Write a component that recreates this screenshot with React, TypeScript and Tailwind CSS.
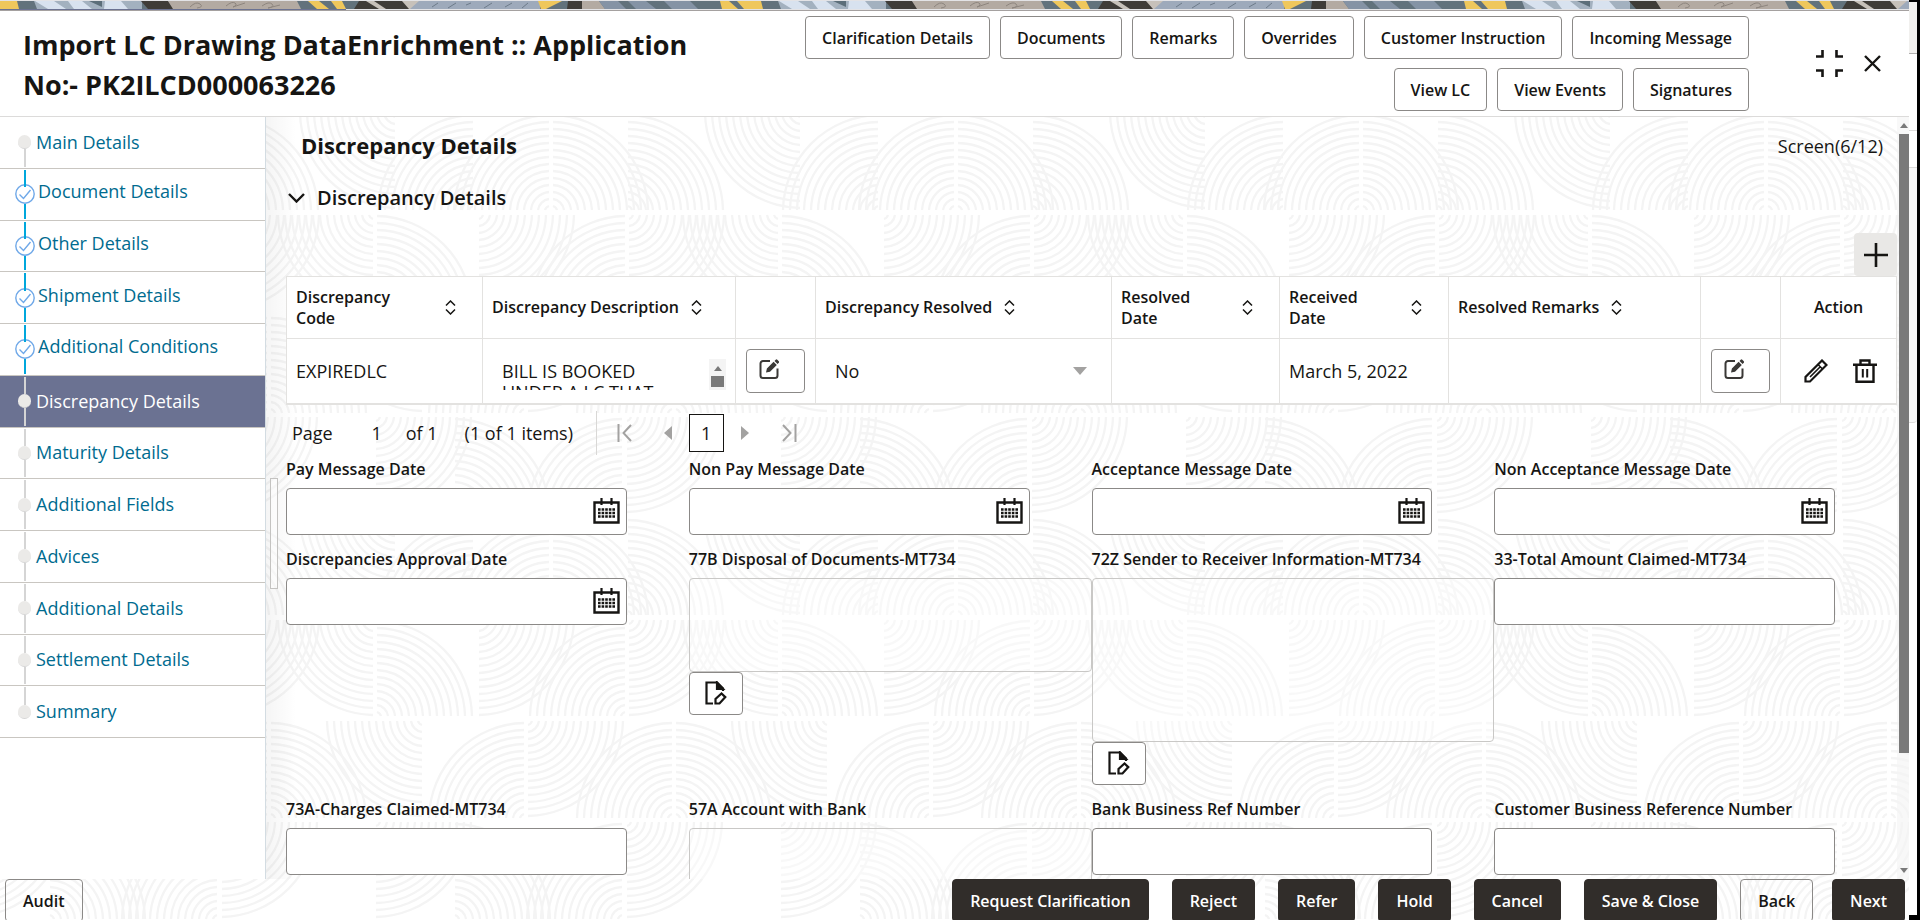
import { useId } from "react";
import type { ReactNode } from "react";
import clsx from "clsx";

const HEADER_ACTIONS = [
  "Clarification Details",
  "Documents",
  "Remarks",
  "Overrides",
  "Customer Instruction",
  "Incoming Message",
  "View LC",
  "View Events",
  "Signatures",
];

const FOOTER_ACTIONS = ["Request Clarification", "Reject", "Refer", "Hold", "Cancel", "Save & Close"];

type StepState = "visited" | "current" | "todo";

const STEPS: { label: string; state: StepState }[] = [
  { label: "Main Details", state: "todo" },
  { label: "Document Details", state: "visited" },
  { label: "Other Details", state: "visited" },
  { label: "Shipment Details", state: "visited" },
  { label: "Additional Conditions", state: "visited" },
  { label: "Discrepancy Details", state: "current" },
  { label: "Maturity Details", state: "todo" },
  { label: "Additional Fields", state: "todo" },
  { label: "Advices", state: "todo" },
  { label: "Additional Details", state: "todo" },
  { label: "Settlement Details", state: "todo" },
  { label: "Summary", state: "todo" },
];

/* ---------- background drawings ---------- */

const RADII = [6, 13, 20, 27, 34, 41, 48, 55, 62, 69, 76, 83, 90, 97];

type Corner = "TL" | "TR" | "BL" | "BR";

// quarter fans of the repeating 405x405 tile: centre x, centre y, quadrant
const FANS: [number, number, Corner][] = [
  [103, 101, "TL"],
  [179, 101, "TL"],
  [179, 101, "TR"],
  [254, 101, "TR"],
  [25, 0, "BL"],
  [430, 0, "BL"],
  [255, 102, "BR"],
  [3, 102, "BL"],
  [408, 102, "BL"],
  [3, 202, "TR"],
  [105, 102, "BR"],
  [255, 202, "TL"],
  [302, 304, "TL"],
  [302, 304, "TR"],
  [52, 203, "BL"],
  [457, 203, "BL"],
  [154, 304, "TL"],
  [154, 203, "BR"],
  [253, 304, "BR"],
  [2, 304, "BR"],
  [81, 405, "TR"],
  [252, 405, "TL"],
];

function fanPath(cx: number, cy: number, corner: Corner) {
  const sx = corner.endsWith("L") ? -1 : 1;
  const sy = corner.startsWith("T") ? -1 : 1;
  const sweep = sx * sy === 1 ? 1 : 0;
  return RADII.map((r) => {
    const startX = cx + sx * r;
    const startY = cy + sy * 2;
    return `M${startX} ${startY}A${r} ${r} 0 0 ${sweep} ${cx + sx * 2} ${cy + sy * r}`;
  }).join("");
}

function ArcBackdrop() {
  return (
    <svg className="absolute inset-0 -z-10 h-full w-full" aria-hidden="true">
      <defs>
        <pattern id="arcs" width="405" height="405" patternUnits="userSpaceOnUse" patternTransform="translate(-33 111)">
          <g fill="none" stroke="#f4f4f4" strokeWidth="2.3">
            {FANS.map(([cx, cy, corner]) => (
              <path key={`${cx}-${cy}-${corner}`} d={fanPath(cx, cy, corner)} />
            ))}
          </g>
        </pattern>
      </defs>
      <rect width="100%" height="100%" fill="url(#arcs)" />
    </svg>
  );
}

function BannerStrip() {
  return (
    <div className="h-[11px] shrink-0 border-b border-[#a5a1a0] bg-[#e3e3e6] pt-px">
      <svg className="block h-2 w-full" aria-hidden="true">
        <defs>
          <pattern id="banner" width="744" height="8" patternUnits="userSpaceOnUse">
            <rect width="744" height="8" fill="#62727c" />
            <path d="M0 0H17L19 8H0z" fill="#efc75c" />
            <path d="M34 0H142V8H37z" fill="#a3b1bf" />
            <path d="M35 0H54L66 8H48z M68 0H82L92 8H74z M105 0H121L128 8H104z" fill="#d8e2ef" />
            <path d="M89 0H102V6z" fill="#5c6e79" />
            <path d="M141 0H168L174 8H148z" fill="#3f3c38" />
            <path d="M168 0H297L301 8H173z" fill="#b3aaa2" />
            <path
              d="M190 6q6-6 10-3t-3 4M226 5q6-5 9-3t-2 4l12-4M262 5q7-5 10-2t-4 4l12-3"
              fill="none"
              stroke="#8d857e"
            />
            <path d="M308 0H319L329 8H317z M331 0H342L346 8H337z" fill="#efc75c" />
            <path d="M359 0H418L410 8H354z" fill="#3f3c38" />
            <path d="M366 0H374L386 8H379z M402 0H422L412 8H409z" fill="#c7c1ba" />
            <path d="M419 0H540V8H410z" fill="#9eaabb" />
            <path
              d="M432 6l6-4M448 7l8-5M466 4l5-2M484 7l8-5M505 6l7-4M522 7l6-5"
              fill="none"
              stroke="#6d7b8a"
            />
            <path d="M538 0H562L546 8H541z" fill="#efc75c" />
            <path d="M568 0H582V8H567z" fill="#3f3c38" />
            <path d="M582 0H599L605 8H582z" fill="#b3aaa2" />
            <path d="M599 0H618L626 8H605z M628 0H646L656 8H636z M664 0H690L698 8H672z" fill="#8593a5" />
            <path d="M720 0H729L738 8H722z M737 0H744V8H744z" fill="#efc75c" />
          </pattern>
        </defs>
        <rect width="100%" height="8" fill="url(#banner)" />
      </svg>
      <div className="h-px w-[346px] bg-[#6b7292]" />
    </div>
  );
}

/* ---------- icons ---------- */

function CalendarIcon() {
  return (
    <svg width="27" height="26" viewBox="0 0 27 26" fill="none" stroke="#161513" aria-hidden="true">
      <path d="M1.5 4.5h24v20h-24z" strokeWidth="2.4" />
      <path d="M8.5 0v7M18.5 0v7" strokeWidth="2.2" />
      <path d="M5 11.5h17M5 15h17M5 18.5h17" strokeWidth="2.4" strokeDasharray="2.6 1" />
    </svg>
  );
}

function ComposeIcon() {
  return (
    <svg width="20" height="20" viewBox="0 0 20 20" fill="none" aria-hidden="true">
      <path
        d="M11 2H4a2.5 2.5 0 0 0-2.5 2.5v12A2.5 2.5 0 0 0 4 19h12a2.5 2.5 0 0 0 2.5-2.5V9.5"
        stroke="#3a3836"
        strokeWidth="2"
      />
      <path
        d="M7 13.5l.9-4L14.6 2.8l3.2 3.2-6.8 6.7z M15.5 1.9l1.2-1.2q.8-.7 1.6 0l1.5 1.5q.7.8 0 1.6L18.6 5z"
        fill="#3a3836"
      />
    </svg>
  );
}

function PencilIcon() {
  return (
    <svg width="24" height="24" viewBox="0 0 24 24" fill="none" stroke="#161513" strokeWidth="2.2" aria-hidden="true">
      <path d="M1.5 22.5V18L18 1.5 22.5 6 6 22.5z" />
      <path d="M14 5.5l4.5 4.5M6 18L16 8" strokeWidth="1.6" />
    </svg>
  );
}

function TrashIcon() {
  return (
    <svg width="24" height="24" viewBox="0 0 24 24" fill="none" stroke="#161513" strokeWidth="2.4" aria-hidden="true">
      <path d="M0 5.8h24M3.5 6v16.8h17V6M7.5 5.5v-4h9v4" />
      <path d="M9.8 10v8.5M14.2 10v8.5" strokeWidth="2" />
    </svg>
  );
}

function DocumentEditIcon() {
  return (
    <svg width="22" height="24" viewBox="0 0 22 24" fill="none" stroke="#161513" strokeWidth="2.2" aria-hidden="true">
      <path d="M8 22.5H1.5v-21H12l6 6V10" />
      <path d="M12 1.5V8h6z" fill="#161513" />
      <path d="M10.5 22.5V18l6-5.5 3.8 3.6-5.8 6.4z" />
    </svg>
  );
}

function SortIcon() {
  return (
    <svg
      className="shrink-0"
      width="11"
      height="15"
      viewBox="0 0 11 15"
      fill="none"
      stroke="#161513"
      strokeWidth="1.5"
      aria-hidden="true"
    >
      <path d="M1 5.5L5.5 1 10 5.5M1 9.5L5.5 14 10 9.5" />
    </svg>
  );
}

function CheckCircle() {
  return (
    <svg width="20" height="20" viewBox="0 0 20 20" fill="none" stroke="#6fa8e8" strokeWidth="1.4" aria-hidden="true">
      <circle cx="10" cy="10" r="9.2" fill="#fff" />
      <path d="M10 0v3" stroke="#00a7dc" strokeWidth="2" />
      <path d="M4.5 10.5l4 4 7-8.5" />
    </svg>
  );
}

/* ---------- page parts ---------- */

function OutlineButton({ children, className }: { children: ReactNode; className?: string }) {
  return (
    <button
      type="button"
      className={clsx(
        "h-[43px] rounded-[4px] border border-[#8b8987] text-base font-semibold whitespace-nowrap",
        className,
      )}
    >
      {children}
    </button>
  );
}

function PageHeader() {
  return (
    <header className="flex h-[106px] shrink-0 items-start border-b border-[#dcdbda] bg-white pr-7">
      <h1 className="w-[720px] shrink-0 pt-[14px] pl-[23px] text-[27px] leading-10 font-bold">
        Import LC Drawing DataEnrichment :: Application No:- PK2ILCD000063226
      </h1>
      <div className="ml-auto flex max-w-[960px] flex-wrap justify-end gap-x-[10px] gap-y-[9px] pt-[5px]">
        {HEADER_ACTIONS.map((label) => (
          <OutlineButton key={label} className="bg-white px-4">
            {label}
          </OutlineButton>
        ))}
      </div>
      <div className="ml-[67px] flex shrink-0 items-center gap-[21px] pt-[39px]">
        <button type="button" aria-label="Collapse">
          <svg className="block" width="27" height="27" viewBox="0 0 27 27" fill="none" stroke="#161513" strokeWidth="2.6">
            <path d="M0 6.5h6.5V0M27 6.5h-6.5V0M0 20.5h6.5V27M27 20.5h-6.5V27" />
          </svg>
        </button>
        <button type="button" aria-label="Close">
          <svg className="block" width="17" height="17" viewBox="0 0 17 17" fill="none" stroke="#161513" strokeWidth="2.4">
            <path d="M1 1l15 15M16 1L1 16" />
          </svg>
        </button>
      </div>
    </header>
  );
}

function StepItem({ label, state, first, last }: { label: string; state: StepState; first: boolean; last: boolean }) {
  const visited = state === "visited";
  const current = state === "current";
  return (
    <li className={clsx("flex-1 border-b border-[#c9c6c1]", current && "bg-[#6b7292]")}>
      <a
        href={`#${label.toLowerCase().replace(/ /g, "-")}`}
        aria-current={current ? "step" : undefined}
        className={clsx("flex h-full items-center pl-[14px] text-lg", current ? "text-white" : "text-[#006b8f]")}
      >
        <span className="flex h-full w-[21px] shrink-0 flex-col items-center py-px">
          <span className={clsx("w-[2px] flex-1", visited ? "bg-[#00a7dc]" : !first && "bg-[#d5d5d5]")} />
          {visited ? (
            <CheckCircle />
          ) : (
            <span className="h-[14px] w-[13px] rounded-full border-b border-[#d5d5d5] bg-[#ebeae8]" />
          )}
          <span className={clsx("w-[2px] flex-1", visited ? "bg-[#00a7dc]" : !last && "bg-[#d5d5d5]")} />
        </span>
        <span className={clsx(visited ? "pb-[6px] pl-[3px]" : "pb-px pl-px")}>{label}</span>
      </a>
    </li>
  );
}

function Sidebar() {
  return (
    <nav aria-label="Screens" className="w-[266px] shrink-0 border-r border-[#d3dce2] bg-white">
      <ol className="flex h-[621px] flex-col">
        {STEPS.map((step, i) => (
          <StepItem key={step.label} {...step} first={i === 0} last={i === STEPS.length - 1} />
        ))}
      </ol>
    </nav>
  );
}

function HeadCell({ label, stretch }: { label: string; stretch?: boolean }) {
  return (
    <th scope="col" className="border border-[#e3e2e0] pr-[26px] pl-[9px] text-left font-semibold">
      <span className="flex items-center gap-3">
        <span className={clsx("whitespace-pre-line", stretch && "flex-1")}>{label}</span>
        <SortIcon />
      </span>
    </th>
  );
}

function EditCell({ label }: { label: string }) {
  return (
    <td className="border border-[#e3e2e0] px-[10px]">
      <button
        type="button"
        aria-label={label}
        className="flex h-11 w-full items-center rounded-[4px] border border-[#8b8987] pb-[3px] pl-3"
      >
        <ComposeIcon />
      </button>
    </td>
  );
}

function DiscrepancyTable() {
  return (
    <table className="w-full table-fixed border-collapse border-b-2 border-[#e3e2e0] bg-white">
      <colgroup>
        <col className="w-[196px]" />
        <col className="w-[253px]" />
        <col className="w-[80px]" />
        <col />
        <col className="w-[168px]" />
        <col className="w-[169px]" />
        <col className="w-[252px]" />
        <col className="w-[80px]" />
        <col className="w-[116px]" />
      </colgroup>
      <thead>
        <tr className="h-[62px] text-base leading-[21px]">
          <HeadCell label={"Discrepancy\nCode"} stretch />
          <HeadCell label="Discrepancy Description" />
          <td className="border border-[#e3e2e0]" />
          <HeadCell label="Discrepancy Resolved" />
          <HeadCell label={"Resolved\nDate"} stretch />
          <HeadCell label={"Received\nDate"} stretch />
          <HeadCell label="Resolved Remarks" />
          <td className="border border-[#e3e2e0]" />
          <th scope="col" className="border border-[#e3e2e0] font-semibold">
            Action
          </th>
        </tr>
      </thead>
      <tbody>
        <tr className="h-[65px] text-lg">
          <td className="border border-[#e3e2e0] px-[9px]">EXPIREDLC</td>
          <td className="border border-[#e3e2e0] pr-[9px] pl-[19px]">
            <div className="mt-2 flex h-[31px]">
              <textarea
                readOnly
                aria-label="Discrepancy Description"
                className="h-[31px] min-w-0 flex-1 resize-none overflow-hidden pt-[2px] pr-10 leading-[21px]"
                value="BILL IS BOOKED UNDER A LC THAT"
              />
              <span className="flex w-[17px] flex-col items-center justify-between bg-[#f4f4f4] pt-[7px] pb-[3px]">
                <svg width="8" height="5" viewBox="0 0 8 5" aria-hidden="true">
                  <path d="M0 5L4 0l4 5z" fill="#7a7a7a" />
                </svg>
                <span className="h-[11px] w-[13px] bg-[#7a7a7a]" />
              </span>
            </div>
          </td>
          <EditCell label="Edit description" />
          <td className="border border-[#e3e2e0] px-[19px]">
            <span className="flex items-center">
              <select aria-label="Discrepancy Resolved" className="flex-1 appearance-none bg-transparent">
                <option>No</option>
              </select>
              <svg className="mr-[5px]" width="14" height="8" viewBox="0 0 14 8" aria-hidden="true">
                <path d="M0 0h14L7 8z" fill="#a3a2a1" />
              </svg>
            </span>
          </td>
          <td className="border border-[#e3e2e0]" />
          <td className="border border-[#e3e2e0] px-[9px]">March 5, 2022</td>
          <td className="border border-[#e3e2e0]" />
          <EditCell label="Edit remarks" />
          <td className="border border-[#e3e2e0] pl-[3px]">
            <span className="flex items-center justify-center gap-[25px]">
              <button type="button" aria-label="Edit row">
                <PencilIcon />
              </button>
              <button type="button" aria-label="Delete row">
                <TrashIcon />
              </button>
            </span>
          </td>
        </tr>
      </tbody>
    </table>
  );
}

function Pager() {
  return (
    <div className="mt-[6px] flex h-[44px] items-center text-lg">
      <label className="flex items-center pl-[6px]">
        Page
        <input readOnly value="1" className="ml-[15px] w-[58px] bg-transparent text-center" />
      </label>
      <span>of 1</span>
      <span className="w-[158px] pl-[27px]">(1 of 1 items)</span>
      <span className="h-full w-px bg-[#d9d8d6]" />
      <div className="flex items-center text-[#a3a2a1]">
        <button type="button" aria-label="First page" className="w-[58px] pl-5">
          <svg width="15" height="18" viewBox="0 0 15 18" fill="none" stroke="currentColor" strokeWidth="2">
            <path d="M1.5 0v18M14 1L6.5 9l7.5 8" />
          </svg>
        </button>
        <button type="button" aria-label="Previous page" className="w-[34px] pl-[9px]">
          <svg width="8" height="14" viewBox="0 0 8 14" fill="currentColor">
            <path d="M8 0v14L0 7z" />
          </svg>
        </button>
        <button type="button" className="h-[38px] w-[35px] border border-[#161513] bg-white text-[#161513]">
          1
        </button>
        <button type="button" aria-label="Next page" className="w-[34px] pl-[17px]">
          <svg width="8" height="14" viewBox="0 0 8 14" fill="currentColor">
            <path d="M0 0v14l8-7z" />
          </svg>
        </button>
        <button type="button" aria-label="Last page" className="w-[48px] pl-6">
          <svg width="15" height="18" viewBox="0 0 15 18" fill="none" stroke="currentColor" strokeWidth="2">
            <path d="M13.5 0v18M1 1l7.5 8L1 17" />
          </svg>
        </button>
      </div>
    </div>
  );
}

function Field({ label, children }: { label: string; children: (id: string) => ReactNode }) {
  const id = useId();
  return (
    <div>
      <label htmlFor={id} className="mb-[7px] block text-base leading-6 font-semibold">
        {label}
      </label>
      {children(id)}
    </div>
  );
}

function TextField({ label, calendar }: { label: string; calendar?: boolean }) {
  return (
    <Field label={label}>
      {(id) => (
        <div className="mr-[62px] flex h-[47px] items-center rounded-[4px] border border-[#8b8987] bg-white pr-[6px]">
          <input id={id} type="text" className="h-full min-w-0 flex-1 px-3 text-lg" />
          {calendar && (
            <button type="button" aria-label={`Pick ${label}`}>
              <CalendarIcon />
            </button>
          )}
        </div>
      )}
    </Field>
  );
}

function LongField({ label, tall }: { label: string; tall?: boolean }) {
  return (
    <Field label={label}>
      {(id) => (
        <>
          <textarea
            id={id}
            className={clsx(
              "block w-full resize-none rounded-[4px] border border-[#c9c8c6] bg-white/40",
              tall ? "h-[164px]" : "h-[94px]",
            )}
          />
          <button
            type="button"
            aria-label={`Edit ${label}`}
            className="flex h-[43px] w-[54px] items-center justify-center rounded-[4px] border border-[#8b8987] bg-white"
          >
            <DocumentEditIcon />
          </button>
        </>
      )}
    </Field>
  );
}

function Scrollbar() {
  return (
    <div className="flex w-3 shrink-0 flex-col items-end bg-[#f3f3f3]/60" aria-hidden="true">
      <svg className="my-[6px] mr-px" width="8" height="5" viewBox="0 0 8 5">
        <path d="M0 5L4 0l4 5z" fill="#7a7a7a" />
      </svg>
      <span className="w-[10px] grow-[622] bg-[#7a7a7a]" />
      <span className="grow-[109]" />
      <svg className="my-[6px] mr-px" width="8" height="5" viewBox="0 0 8 5">
        <path d="M0 0h8L4 5z" fill="#7a7a7a" />
      </svg>
    </div>
  );
}

function Main() {
  return (
    <main className="relative min-w-0 flex-1 overflow-hidden bg-linear-to-r from-black/4 via-transparent via-[30px] to-transparent pl-5">
      <div className="absolute top-[361px] left-1 h-[111px] w-2 border border-[#c4c3c1] bg-white/50" />
      <div className="flex h-[57px] items-center justify-between pr-[14px] pl-[15px]">
        <h2 className="text-[22px] font-bold">Discrepancy Details</h2>
        <span className="text-lg">Screen(6/12)</span>
      </div>
      <button type="button" aria-expanded="true" className="flex h-12 items-center gap-3 pl-[2px] text-xl font-semibold">
        <svg width="17" height="10" viewBox="0 0 17 10" fill="none" stroke="#161513" strokeWidth="2.4">
          <path d="M1 1l7.5 7.5L16 1" />
        </svg>
        Discrepancy Details
      </button>
      <div className="mt-[11px] flex justify-end">
        <button type="button" aria-label="Add row" className="flex size-[43px] items-center justify-center rounded-[4px] bg-[#e9e8e6]">
          <svg width="24" height="24" viewBox="0 0 24 24" stroke="#161513" strokeWidth="2.6">
            <path d="M12 0v24M0 12h24" />
          </svg>
        </button>
      </div>
      <DiscrepancyTable />
      <Pager />
      <form className="mt-[2px] grid grid-cols-4 gap-y-3">
        <TextField label="Pay Message Date" calendar />
        <TextField label="Non Pay Message Date" calendar />
        <TextField label="Acceptance Message Date" calendar />
        <TextField label="Non Acceptance Message Date" calendar />
        <TextField label="Discrepancies Approval Date" calendar />
        <LongField label="77B Disposal of Documents-MT734" />
        <LongField label="72Z Sender to Receiver Information-MT734" tall />
        <TextField label="33-Total Amount Claimed-MT734" />
        <TextField label="73A-Charges Claimed-MT734" />
        <LongField label="57A Account with Bank" />
        <TextField label="Bank Business Ref Number" />
        <TextField label="Customer Business Reference Number" />
      </form>
    </main>
  );
}

function PageFooter() {
  return (
    <footer className="flex h-[41px] shrink-0 items-start pr-1 pl-[5px]">
      <OutlineButton className="px-[17px]">Audit</OutlineButton>
      <div className="ml-auto flex gap-[23px]">
        {FOOTER_ACTIONS.map((label) => (
          <OutlineButton key={label} className="border-[#312d2a] bg-[#312d2a] px-[17px] text-white">
            {label}
          </OutlineButton>
        ))}
        <OutlineButton className="px-[17px]">Back</OutlineButton>
        <OutlineButton className="-ml-1 border-[#312d2a] bg-[#312d2a] px-[17px] text-white">Next</OutlineButton>
      </div>
    </footer>
  );
}

export default function App() {
  return (
    <div className="flex h-screen overflow-hidden bg-white font-['Open_Sans',sans-serif] text-[#161513]">
      <div className="relative isolate flex min-w-0 flex-1 flex-col">
        <ArcBackdrop />
        <BannerStrip />
        <PageHeader />
        <div className="flex min-h-0 flex-1">
          <Sidebar />
          <Main />
          <Scrollbar />
        </div>
        <PageFooter />
      </div>
      <div className="flex w-[11px] shrink-0 flex-col border-t-2 border-r-[3px] border-b-[5px] border-black" aria-hidden="true">
        <span className="h-[52px] border-b border-[#b0afae] bg-[#f1f0ee]" />
        <span className="h-[77px] border-b border-[#dcdbda]" />
        <span className="h-[37px] border-b border-[#dcdbda]" />
        <span className="h-[255px] rounded-br border-b border-[#dcdbda] bg-[#f7f7f7]" />
        <span className="flex-1" />
      </div>
    </div>
  );
}
